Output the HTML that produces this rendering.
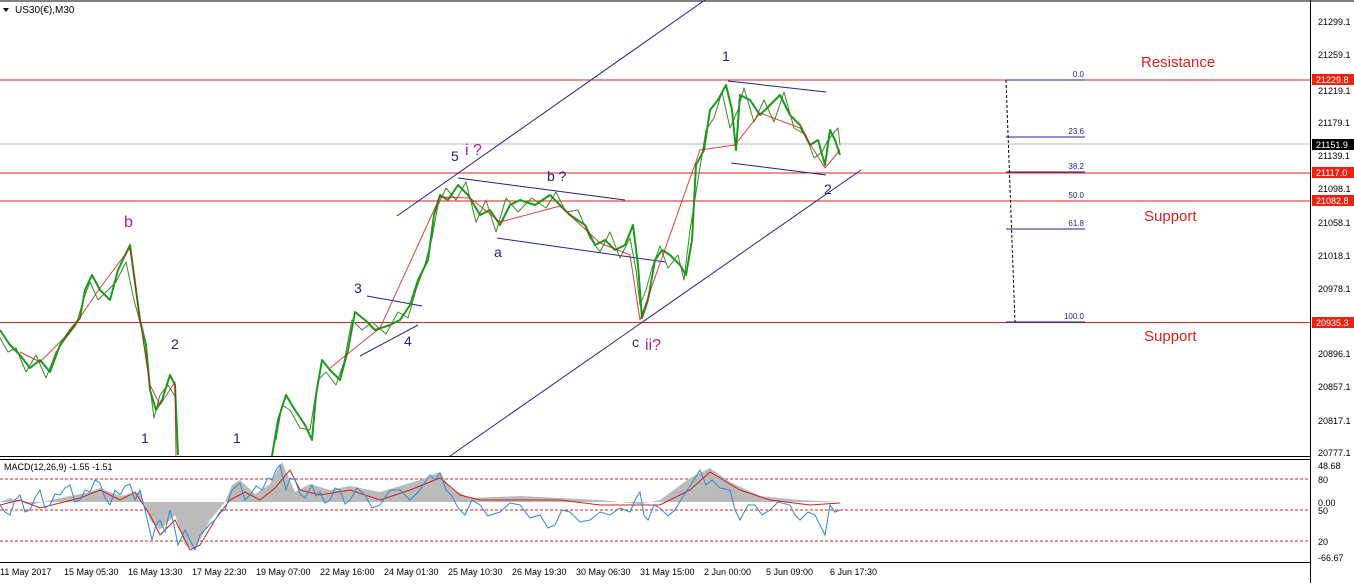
<!DOCTYPE html>
<html><head><meta charset="utf-8"><style>
body{margin:0;background:#fff;width:1354px;height:583px;overflow:hidden;font-family:"Liberation Sans",sans-serif}
svg text{font-family:"Liberation Sans",sans-serif}
</style></head><body>
<svg width="1354" height="583" viewBox="0 0 1354 583" xmlns="http://www.w3.org/2000/svg">
<rect width="1354" height="583" fill="#fff"/>
<line x1="0" y1="1" x2="1354" y2="1" stroke="#000"/>
<line x1="1310.5" y1="0" x2="1310.5" y2="583" stroke="#000"/>
<line x1="0" y1="456.5" x2="1310" y2="456.5" stroke="#000"/>
<line x1="0" y1="459.5" x2="1310" y2="459.5" stroke="#000"/>
<line x1="0" y1="562.5" x2="1310" y2="562.5" stroke="#000"/>
<polygon points="3,8 9,8 6,12" fill="#000"/>
<text x="15" y="13" font-size="10">US30(€),M30</text>
<line x1="0" y1="80" x2="1310" y2="80" stroke="#d22"/>
<line x1="0" y1="144" x2="1310" y2="144" stroke="#bbb"/>
<line x1="0" y1="173" x2="1310" y2="173" stroke="#d22"/>
<line x1="0" y1="201" x2="1310" y2="201" stroke="#d22"/>
<line x1="0" y1="322.5" x2="1310" y2="322.5" stroke="#d22"/>
<g stroke="#22228a" stroke-width="1" fill="none">
<line x1="397" y1="216" x2="705" y2="0"/>
<line x1="450" y1="456" x2="861" y2="170"/>
<line x1="458" y1="178" x2="625" y2="200"/>
<line x1="497" y1="238" x2="665" y2="262"/>
<line x1="367" y1="296" x2="422" y2="306"/>
<line x1="360" y1="356" x2="418" y2="325"/>
<line x1="728" y1="81" x2="826" y2="92"/>
<line x1="731" y1="163" x2="826" y2="175"/>
<line x1="1006" y1="80" x2="1085" y2="80"/>
<line x1="1006" y1="137" x2="1085" y2="137"/>
<line x1="1006" y1="172" x2="1085" y2="172"/>
<line x1="1006" y1="229" x2="1085" y2="229"/>
<line x1="1006" y1="322" x2="1085" y2="322"/>
<line x1="1006" y1="80" x2="1015" y2="322" stroke="#000" stroke-dasharray="3,2"/>
</g>
<g font-size="8" fill="#22228a" text-anchor="end">
<text x="1084" y="77">0.0</text><text x="1084" y="134">23.6</text><text x="1084" y="169">38.2</text>
<text x="1084" y="198">50.0</text><text x="1084" y="226">61.8</text><text x="1084" y="319">100.0</text>
</g>
<g fill="none" stroke-linejoin="round">
<polyline stroke="#1a9a1a" stroke-width="2" points="0,330 10,345 20,355 30,368 40,360 50,372 60,345 70,330 80,318 85,290 92,275 100,290 110,300 118,270 130,245 136,290 140,320 146,345 150,390 156,410 162,400 170,375 175,385 178,455"/>
<polyline stroke="#1a9a1a" stroke-width="2" points="272,456 278,420 286,395 295,410 305,425 312,440 316,395 322,360 330,370 340,380 348,350 355,312 365,320 375,330 390,325 400,320 410,305 418,280 428,260 434,215 440,195 448,200 458,185 468,195 480,215 490,210 500,225 510,205 520,200 535,205 550,195 560,205 570,215 585,225 595,245 605,240 615,250 625,245 633,225 638,265 642,318 648,300 655,260 662,250 670,255 680,265 686,275 692,240 696,165 704,150 710,110 718,100 726,85 732,110 736,150 740,95 750,100 760,115 770,105 780,95 790,115 800,125 810,145 818,140 825,165 830,130 835,140 840,155"/>
<polyline stroke="#3a8a2a" stroke-width="1" points="0,338 8,352 16,348 26,372 36,355 46,378 56,352 66,338 76,325 84,298 90,282 98,300 106,292 116,282 126,262 134,300 142,330 148,372 154,418 160,395 168,385 176,398"/>
<polyline stroke="#3a8a2a" stroke-width="1" points="276,440 282,405 290,410 300,428 310,430 318,380 326,372 336,385 344,362 352,320 362,330 372,322 386,334 398,312 408,318 416,290 424,268 432,238 438,205 446,188 456,200 466,182 476,222 486,200 496,232 506,198 518,212 532,198 546,208 556,192 566,212 578,210 590,238 600,252 610,232 620,258 630,238 636,270 640,305 646,290 652,268 660,246 668,268 678,255 684,280 690,230 698,180 706,130 714,118 722,92 730,128 738,110 744,88 754,122 764,100 774,122 784,92 794,128 806,135 814,158 822,152 828,140 838,128 840,145"/>
<polyline stroke="#cc1111" stroke-width="1" opacity=".8" points="20,352 40,362 70,332 100,288 130,248 140,320 150,385 160,405 175,382 176,456"/>
<polyline stroke="#cc1111" stroke-width="1" opacity=".8" points="330,368 380,328 440,197 470,198 500,222 560,206 600,243 630,255 640,320 700,150 735,145 760,113 800,128 825,168 840,150"/>
</g>
<g font-size="14" fill="#22228a">
<text x="722" y="61">1</text><text x="451" y="161">5</text><text x="547" y="181">b ?</text>
<text x="494" y="257">a</text><text x="632" y="347">c</text><text x="824" y="194">2</text>
<text x="354" y="293">3</text><text x="404" y="346">4</text><text x="171" y="349">2</text>
<text x="141" y="443">1</text><text x="233" y="443">1</text>
</g>
<g font-size="16" fill="#b0228a">
<text x="465" y="155">i ?</text><text x="645" y="350">ii?</text><text x="124" y="227">b</text>
</g>
<g font-size="15" fill="#d22">
<text x="1141" y="67">Resistance</text><text x="1144" y="221">Support</text><text x="1144" y="341">Support</text>
</g>
<g font-size="9" fill="#000">
<text x="1318" y="25">21299.1</text><text x="1318" y="58">21259.1</text><text x="1318" y="94">21219.1</text>
<text x="1318" y="126">21179.1</text><text x="1318" y="159">21139.1</text><text x="1318" y="192">21098.1</text>
<text x="1318" y="226">21058.1</text><text x="1318" y="259">21018.1</text><text x="1318" y="292">20978.1</text>
<text x="1318" y="357">20896.1</text><text x="1318" y="390">20857.1</text><text x="1318" y="424">20817.1</text>
<text x="1318" y="456">20777.1</text>
<text x="1318" y="469">48.68</text><text x="1318" y="483">80</text><text x="1318" y="506">0.00</text>
<text x="1318" y="514">50</text><text x="1318" y="545">20</text><text x="1318" y="561">-66.67</text>
</g>
<rect x="1312" y="74" width="42" height="11" fill="#e21"/><text x="1316" y="83" font-size="9" fill="#fff">21229.8</text>
<rect x="1312" y="139" width="42" height="11" fill="#000"/><text x="1316" y="148" font-size="9" fill="#fff">21151.9</text>
<rect x="1312" y="167" width="42" height="11" fill="#e21"/><text x="1316" y="176" font-size="9" fill="#fff">21117.0</text>
<rect x="1312" y="195" width="42" height="11" fill="#e21"/><text x="1316" y="204" font-size="9" fill="#fff">21082.8</text>
<rect x="1312" y="317" width="42" height="11" fill="#e21"/><text x="1316" y="326" font-size="9" fill="#fff">20935.3</text>
<text x="4" y="470" font-size="9">MACD(12,26,9) -1.55 -1.51</text>
<g stroke="#d22" stroke-dasharray="3,2"><line x1="0" y1="479" x2="1310" y2="479"/><line x1="0" y1="510" x2="1310" y2="510"/><line x1="0" y1="541" x2="1310" y2="541"/></g>
<path fill="#bbb" d="M0,502 L10,498 L30,505 L60,498 L90,492 L100,488 L120,496 L140,492 L150,520 L160,530 L175,515 L185,545 L195,550 L210,520 L225,502 L232,485 L240,480 L255,494 L270,484 L282,462 L295,492 L310,484 L330,490 L350,486 L380,492 L420,480 L440,472 L450,488 L470,498 L520,496 L560,498 L600,500 L640,504 L660,500 L690,478 L710,468 L730,482 L760,496 L800,500 L840,502 L0,502Z"/>
<polyline fill="none" stroke="#cc2222" points="0,505 20,500 40,508 60,503 80,498 100,490 120,500 135,492 150,515 160,535 175,520 190,550 200,545 215,520 230,500 245,492 260,500 275,488 290,470 300,490 320,495 350,490 380,500 410,490 440,478 460,495 480,500 520,500 560,500 600,505 640,505 660,505 690,490 710,472 740,490 770,500 810,505 840,503"/>
<polyline fill="none" stroke="#3388cc" points="0,505 5,512 10,515 15,500 20,495 25,512 30,510 35,498 40,490 45,508 50,505 55,494 60,495 65,488 70,485 75,502 80,500 85,490 90,492 95,480 100,483 105,498 110,505 115,490 120,495 125,486 130,484 135,500 140,490 145,510 152,540 156,525 160,520 165,532 170,510 174,525 178,545 185,530 190,540 195,550 200,535 205,530 210,524 215,520 220,512 225,510 232,490 240,483 245,500 250,495 256,486 262,490 268,478 272,480 276,470 280,465 286,490 290,478 295,480 300,494 305,498 312,485 316,496 320,492 325,503 330,500 335,488 340,490 345,504 350,500 357,488 365,495 372,508 380,505 390,490 400,490 410,500 420,490 425,482 430,475 435,480 440,473 446,490 452,496 458,508 465,515 472,500 480,505 488,516 500,512 510,503 520,505 530,518 540,515 548,528 555,525 562,510 570,512 580,522 590,520 600,512 610,515 620,508 630,512 636,498 640,492 644,515 648,520 654,505 660,508 668,516 675,510 682,498 690,486 695,478 700,470 706,485 712,480 720,488 730,490 735,510 740,520 748,505 755,505 762,515 770,510 778,502 790,505 795,515 800,520 808,512 815,515 820,525 825,535 830,505 835,512 840,510"/>
<g font-size="9" fill="#000">
<text x="0" y="575">11 May 2017</text><text x="64" y="575">15 May 05:30</text><text x="128" y="575">16 May 13:30</text>
<text x="192" y="575">17 May 22:30</text><text x="256" y="575">19 May 07:00</text><text x="320" y="575">22 May 16:00</text>
<text x="384" y="575">24 May 01:30</text><text x="448" y="575">25 May 10:30</text><text x="512" y="575">26 May 19:30</text>
<text x="576" y="575">30 May 06:30</text><text x="640" y="575">31 May 15:00</text><text x="704" y="575">2 Jun 00:00</text>
<text x="766" y="575">5 Jun 09:00</text><text x="830" y="575">6 Jun 17:30</text>
</g>
</svg>
</body></html>
